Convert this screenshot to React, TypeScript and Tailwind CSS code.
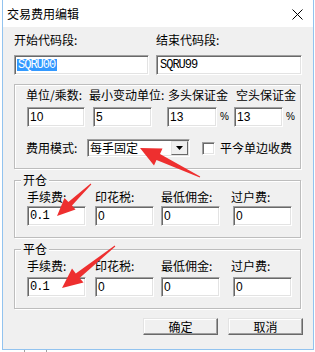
import React from 'react'

const cjk = { fontFamily: '"Noto Sans CJK SC", "Noto Sans", sans-serif' }
const sans = { fontFamily: '"Liberation Sans", Arial, sans-serif' }
const mono = { fontFamily: '"Liberation Mono", "Courier New", monospace' }

function Field({ className, children }: { className: string; children?: React.ReactNode }) {
  return (
    <div
      className={
        'h-[20px] bg-white border border-t-[#a0a0a0] border-l-[#a0a0a0] border-r-white border-b-white shadow-[inset_1px_1px_0_#696969,inset_-1px_-1px_0_#e3e3e3] flex items-center pl-[2px] text-black ' +
        className
      }
    >
      {children}
    </div>
  )
}

function Label({ className, children }: { className: string; children: React.ReactNode }) {
  return <div className={'text-[12px] leading-[14px] text-black whitespace-nowrap ' + className}>{children}</div>
}

function Group({ title, className, children }: { title?: string; className: string; children: React.ReactNode }) {
  return (
    <div
      className={
        'relative w-[287px] border border-[#bdbdbd] shadow-[inset_1px_1px_0_#fff,1px_1px_0_#fff] ' + className
      }
    >
      {title && (
        <span className="absolute -top-[8px] left-[6px] px-[2px] bg-[#f0f0f0] text-[12px] leading-[14px] text-black">
          {title}
        </span>
      )}
      {children}
    </div>
  )
}

function Button({ children }: { children: React.ReactNode }) {
  return (
    <div className="w-[75px] h-[17px] bg-[#f0f0f0] border border-t-[#e3e3e3] border-l-[#e3e3e3] border-r-[#696969] border-b-[#696969] shadow-[inset_-1px_-1px_0_#a0a0a0,inset_1px_1px_0_#fff] flex items-center justify-center text-[12px] leading-none text-black">
      {children}
    </div>
  )
}

function FeeGroup({ title, className, gap }: { title: string; className: string; gap: string }) {
  return (
    <Group title={title} className={className}>
      <div className="flex pl-[12px]">
        <Label className="w-[68px]">手续费:</Label>
        <Label className="w-[66px]">印花税:</Label>
        <Label className="w-[70px]">最低佣金:</Label>
        <Label className="">过户费:</Label>
      </div>
      <div className={'flex pl-[12px] ' + gap}>
        <Field className="w-[59px]">
          <span style={mono} className="text-[12px] tracking-[-1px] leading-none">
            0.1
          </span>
        </Field>
        <Field className="w-[59px] ml-[9px]">
          <span style={sans} className="text-[12px] leading-none">0</span>
        </Field>
        <Field className="w-[59px] ml-[7px]">
          <span style={sans} className="text-[12px] leading-none">0</span>
        </Field>
        <Field className="w-[59px] ml-[13px]">
          <span style={sans} className="text-[12px] leading-none">0</span>
        </Field>
      </div>
    </Group>
  )
}

export default function App() {
  return (
    <div className="relative w-[315px] h-[352px] bg-white overflow-hidden flex flex-col" style={cjk}>
      <div className="ml-[2px] w-[312px] h-[350px] border-x border-b border-[#92c3ef] flex flex-col">
        {/* title bar */}
        <div className="h-[27px] bg-white flex items-center justify-between pl-[4px] pr-[10px]">
          <span className="text-[12px] leading-[14px] text-black">交易费用编辑</span>
          <svg width="11" height="11" viewBox="0 0 11 11" className="mt-[1px]">
            <path d="M0.5 0.5L10.5 10.5M10.5 0.5L0.5 10.5" stroke="#000" strokeWidth="1" />
          </svg>
        </div>

        <div className="flex-1 bg-[#f0f0f0] flex flex-col pl-[11px]">
          <div className="flex mt-[6px]">
            <Label className="w-[142px]">开始代码段:</Label>
            <Label className="">结束代码段:</Label>
          </div>
          <div className="flex mt-[8px]">
            <Field className="w-[135px]">
              <span
                style={mono}
                className="text-[12px] tracking-[-1px] leading-[12px] bg-[#3399ff] text-white pl-[1px] pr-[2px]"
              >
                SQRU00
              </span>
            </Field>
            <Field className="w-[146px] ml-[7px]">
              <span style={mono} className="text-[12px] tracking-[-1px] leading-none px-[1px]">
                SQRU99
              </span>
            </Field>
          </div>

          <Group className="mt-[9px] h-[85px] pt-[3px]">
            <div className="flex pl-[11px]">
              <Label className="w-[63px]">单位/乘数:</Label>
              <Label className="w-[79px]">最小变动单位:</Label>
              <Label className="w-[68px]">多头保证金</Label>
              <Label className="">空头保证金</Label>
            </div>
            <div className="flex items-center pl-[12px] mt-[5px]">
              <Field className="w-[58px]">
                <span style={sans} className="text-[12px] leading-none">10</span>
              </Field>
              <Field className="w-[59px] ml-[8px]">
                <span style={sans} className="text-[12px] leading-none">5</span>
              </Field>
              <Field className="w-[50px] ml-[15px]">
                <span style={sans} className="text-[12px] leading-none">13</span>
              </Field>
              <span style={sans} className="ml-[3px] w-[14px] text-[10px] leading-none">%</span>
              <Field className="w-[49px]">
                <span style={sans} className="text-[12px] leading-none">13</span>
              </Field>
              <span style={sans} className="ml-[3px] text-[10px] leading-none">%</span>
            </div>
            <div className="flex items-center pl-[11px] mt-[12px] h-[18px]">
              <Label className="w-[61px]">费用模式:</Label>
              <div className="w-[103px] h-[18px] bg-white border border-t-[#a0a0a0] border-l-[#a0a0a0] border-r-white border-b-white shadow-[inset_1px_1px_0_#696969,inset_-1px_-1px_0_#e3e3e3] flex items-center justify-between pl-[2px] pr-[1px]">
                <span className="text-[12px] leading-none text-black">每手固定</span>
                <div className="w-[17px] h-[14px] bg-[#f0f0f0] border border-t-[#e3e3e3] border-l-[#e3e3e3] border-r-[#696969] border-b-[#696969] flex items-center justify-center">
                  <svg width="7" height="4" viewBox="0 0 7 4">
                    <path d="M0 0H7L3.5 4Z" fill="#000" />
                  </svg>
                </div>
              </div>
              <div className="ml-[12px] w-[13px] h-[13px] bg-white border border-t-[#a0a0a0] border-l-[#a0a0a0] border-r-white border-b-white shadow-[inset_1px_1px_0_#696969,inset_-1px_-1px_0_#e3e3e3]" />
              <Label className="ml-[5px]">平今单边收费</Label>
            </div>
          </Group>

          <FeeGroup title="开仓" className="mt-[11px] h-[58px] pt-[9px]" gap="mt-[2px]" />
          <FeeGroup title="平仓" className="mt-[11px] h-[60px] pt-[9px]" gap="mt-[4px]" />

          <div className="flex justify-end gap-[10px] pr-[10px] mt-[9px]">
            <Button>确定</Button>
            <Button>取消</Button>
          </div>
        </div>
      </div>
      <div className="h-[2px] flex">
        <div className="ml-[24px] w-[1px] bg-[#a0a0a0]" />
        <div className="ml-[21px] w-[1px] bg-[#a0a0a0]" />
      </div>

      {/* red annotation arrows */}
      <svg className="absolute left-0 top-0 pointer-events-none" width="315" height="352" viewBox="0 0 315 352">
        <polygon
          fill="#ee2f2f"
          points="140,148 162.5,148.5 160,154 200.2,176.6 199.8,177.4 156.5,160 154,165.5"
        />
        <polygon
          fill="#ee2f2f"
          points="57,216 75.5,209.5 72,205.5 91.3,184.4 90.7,183.6 68.4,202 64.5,198"
        />
        <polygon
          fill="#ee2f2f"
          points="62,288 83.5,282.5 79.6,278 115.3,246.4 114.7,245.6 75.8,273.5 72,268.5"
        />
      </svg>
    </div>
  )
}
